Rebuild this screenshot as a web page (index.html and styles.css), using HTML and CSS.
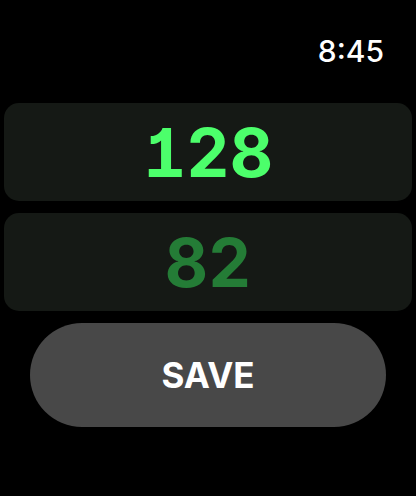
FILE: index.html
```html
<!DOCTYPE html>
<html lang="en">
<head>
  <meta charset="UTF-8" />
  <meta name="viewport" content="width=device-width, initial-scale=1.0"/>
  <title>Blood Pressure</title>
  <link rel="stylesheet" href="styles.css">
</head>
<body>

  <div class="status-bar">
    <span class="time">8:45</span>
  </div>

  <div class="values">
    <div class="value-box systolic">128</div>
    <div class="value-box diastolic">82</div>
  </div>

  <button class="save-btn">SAVE</button>

</body>
</html>
```

FILE: styles.css
```css
body {
  margin: 0;
  background-color: #000;
  font-family: Inter, "Liberation Sans", Arial, sans-serif;
  color: #fff;
  width: 416px;
  height: 496px;
  overflow: hidden;
}

.status-bar {
  height: 103px;
  display: flex;
  justify-content: flex-end;
  align-items: flex-start;
  padding-right: 32px;
  box-sizing: border-box;
}

.time {
  font-size: 30px;
  line-height: 32px;
  margin-top: 35px;
  font-weight: 500;
}

.values {
  display: flex;
  flex-direction: column;
  gap: 12px;
  padding: 0 4px;
}

.value-box {
  height: 98px;
  border-radius: 15px;
  background-color: #151915;
  display: flex;
  align-items: center;
  justify-content: center;
  font-size: 67px;
  font-weight: 700;
  font-feature-settings: "cv01", "tnum";
}

.systolic {
  color: #4cff6b;
}

.diastolic {
  color: #247c36;
}

.save-btn {
  display: block;
  margin: 12px 0 0 30px;
  width: 356px;
  height: 104px;
  border: none;
  border-radius: 52px;
  background-color: #484848;
  color: #fff;
  font-family: Inter, "Liberation Sans", Arial, sans-serif;
  font-size: 35px;
  font-weight: 700;
  cursor: pointer;
}
```
